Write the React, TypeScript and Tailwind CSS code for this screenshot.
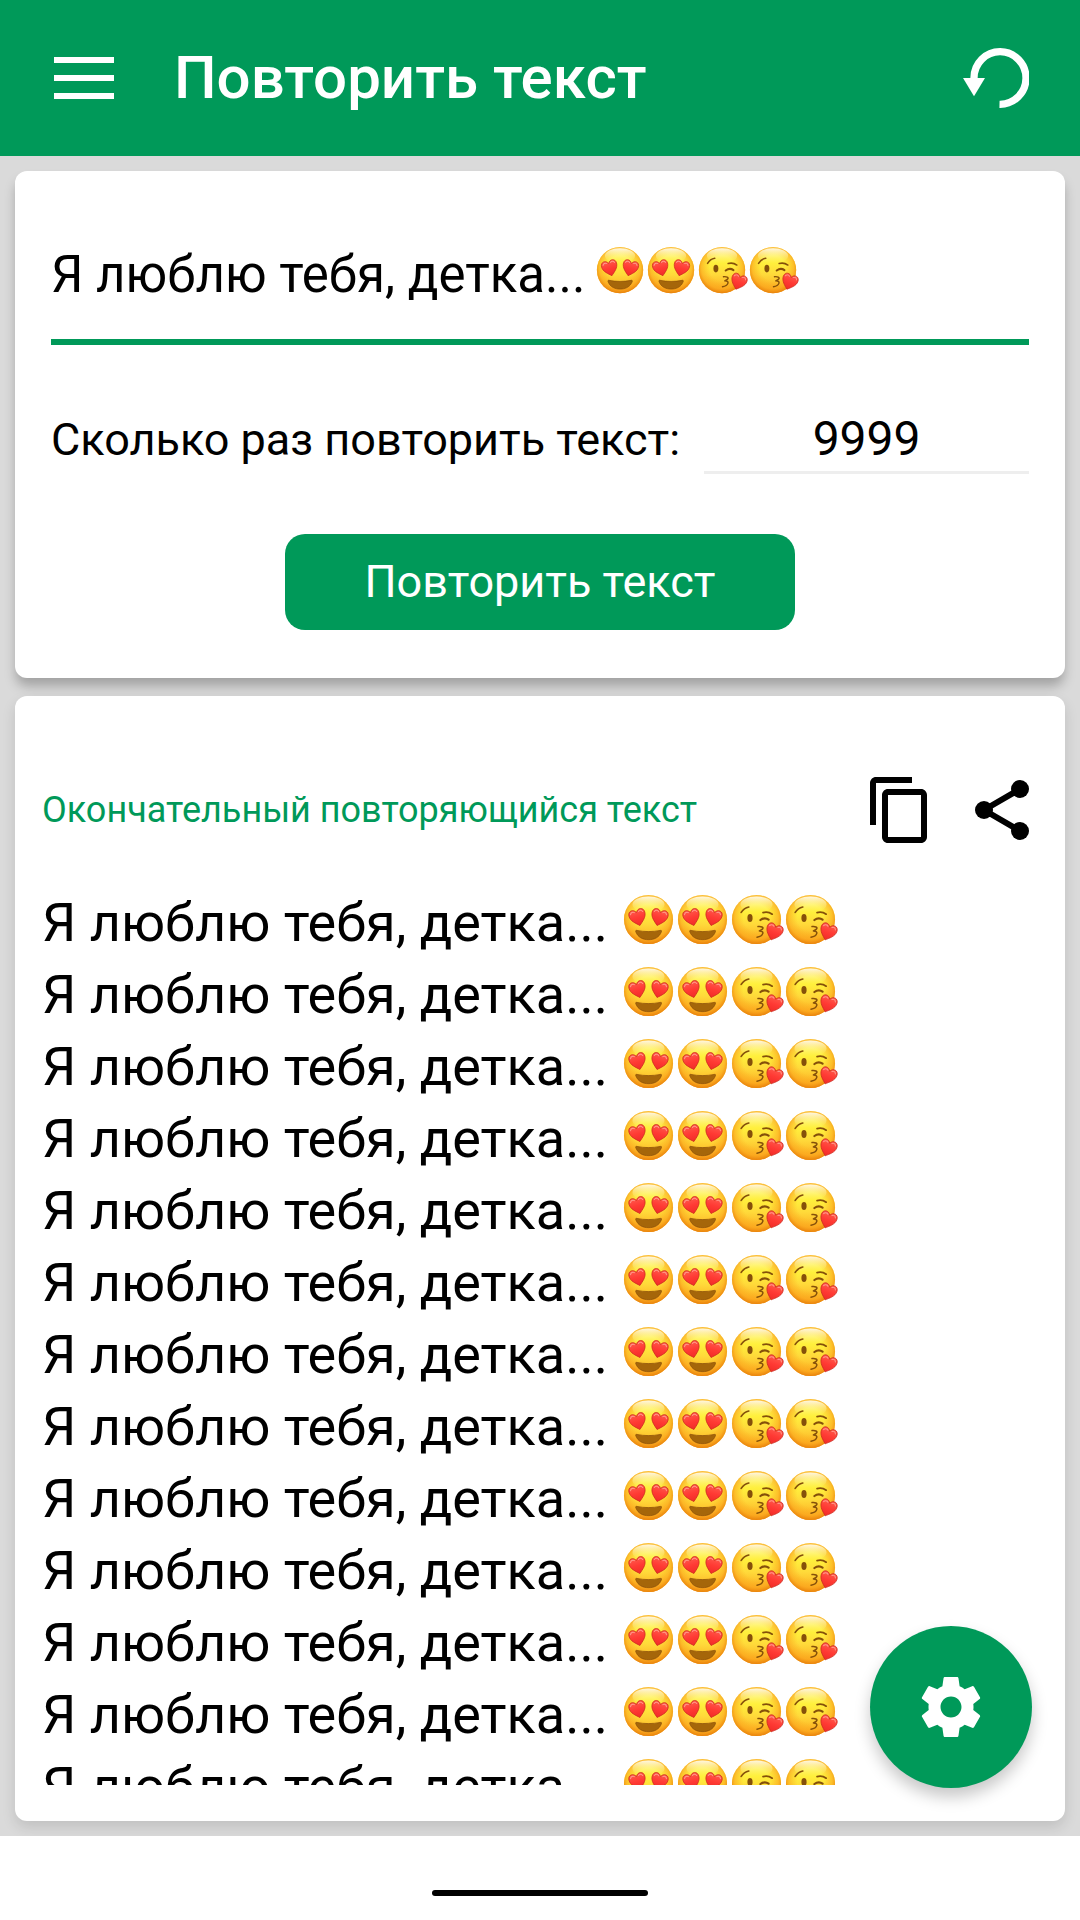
import React, { useId, useState } from "react";

const PHRASE = "Я люблю тебя, детка...";
const VISIBLE_LINES = 13;

type IconProps = {
  className?: string;
};

const Face: React.FC<{ className?: string; children: React.ReactNode }> = ({
  className,
  children,
}) => {
  const id = useId();
  return (
    <svg viewBox="0 0 54 54" className={className} aria-hidden="true">
      <defs>
        <linearGradient id={`${id}-base`} x1="0" y1="0" x2="0" y2="1">
          <stop offset="0" stopColor="#fff07a" />
          <stop offset="0.35" stopColor="#fff03c" />
          <stop offset="0.6" stopColor="#ffd93a" />
          <stop offset="1" stopColor="#fba51c" />
        </linearGradient>
        <radialGradient id={`${id}-rim`} cx="0.5" cy="0.46" r="0.54">
          <stop offset="0.5" stopColor="#fba81c" stopOpacity="0" />
          <stop offset="0.82" stopColor="#fba41c" stopOpacity="0.6" />
          <stop offset="1" stopColor="#e8820c" stopOpacity="1" />
        </radialGradient>
        <linearGradient id={`${id}-shine`} x1="0" y1="0" x2="0" y2="1">
          <stop offset="0" stopColor="#ffffff" stopOpacity="0.85" />
          <stop offset="1" stopColor="#fff65a" stopOpacity="0" />
        </linearGradient>
      </defs>
      <circle cx="26.5" cy="26.5" r="24.5" fill={`url(#${id}-base)`} />
      <circle cx="26.5" cy="26.5" r="24.5" fill={`url(#${id}-rim)`} />
      <ellipse cx="26.5" cy="11.5" rx="16" ry="8" fill={`url(#${id}-shine)`} />
      {children}
    </svg>
  );
};

const Heart: React.FC<{ transform: string }> = ({ transform }) => {
  const id = useId();
  return (
    <g transform={transform}>
      <linearGradient id={id} x1="0" y1="0" x2="0" y2="1">
        <stop offset="0" stopColor="#ff5a4c" />
        <stop offset="0.5" stopColor="#ff3a34" />
        <stop offset="1" stopColor="#f02c28" />
      </linearGradient>
      <path
        d="M0 9C-3.4 5.8-8.2 2.6-8.2-2.8C-8.2-8-2.2-9 0-4.4C2.2-9 8.2-8 8.2-2.8C8.2 2.6 3.4 5.8 0 9Z"
        fill={`url(#${id})`}
        stroke="#c9281c"
        strokeWidth="0.7"
      />
      <path
        d="M-6.3-3.8C-5.6-5.8-3.4-6.2-2-4.8M2.2-4.9C3.6-6.3 5.6-5.8 6.3-3.8"
        fill="none"
        stroke="#ff9a8c"
        strokeWidth="1"
        strokeLinecap="round"
      />
    </g>
  );
};

const HeartEyes: React.FC<IconProps> = ({ className }) => (
  <Face className={className}>
    <Heart transform="translate(15.6 23.8) rotate(-15)" />
    <Heart transform="translate(37.4 23.8) rotate(15)" />
    <path
      d="M14.8 37.4C22 39 31 39 38.4 37.4C39.6 37.2 39.7 37.9 39.3 39C37.3 44.2 32.5 46.7 26.6 46.7C20.7 46.7 15.9 44.2 13.9 39C13.5 37.9 13.6 37.2 14.8 37.4Z"
      fill="#a5660a"
      stroke="#874c08"
      strokeWidth="0.7"
    />
  </Face>
);

const BlowingKiss: React.FC<IconProps> = ({ className }) => (
  <Face className={className}>
    <ellipse cx="20" cy="25" rx="2.6" ry="4" fill="#85500a" />
    <g fill="none" stroke="#85500a" strokeLinecap="round" strokeLinejoin="round">
      <path d="M11.2 19.4C13 16.4 15.6 14.6 18.8 14" strokeWidth="1.7" />
      <path d="M33 19.6C36.2 18.7 39.5 19.2 42.2 21.2" strokeWidth="1.7" />
      <path d="M30.4 27C33 25 36.4 25 38.6 26.6" strokeWidth="2.2" />
      <path
        d="M28 33.6C31.5 33.2 33.5 34.3 32.8 35.6C32.2 36.7 30.8 37.3 29.4 38C31.6 37.9 33.3 38.8 32.8 40.4C32.2 42.2 30 43.8 27 44.2"
        strokeWidth="1.5"
      />
    </g>
    <Heart transform="translate(44.2 38.4) rotate(20)" />
  </Face>
);

const Emojis: React.FC<{ size: string }> = ({ size }) => (
  <span className="flex shrink-0" role="img" aria-label="😍😍😘😘">
    <HeartEyes className={size} />
    <HeartEyes className={size} />
    <BlowingKiss className={size} />
    <BlowingKiss className={size} />
  </span>
);

const MenuIcon: React.FC<IconProps> = ({ className }) => (
  <svg viewBox="0 0 60 42" className={className} fill="currentColor">
    <path d="M0 0h60v6H0zM0 18h60v6H0zM0 36h60v6H0z" />
  </svg>
);

const ResetIcon: React.FC<IconProps> = ({ className }) => (
  <svg viewBox="0 0 66 60" className={className}>
    <path
      d="M36.5 56.3A26 26.3 0 1 0 11 30"
      fill="none"
      stroke="currentColor"
      strokeWidth="7.3"
    />
    <path d="M0 30h22L11 48.3z" fill="currentColor" />
  </svg>
);

const CopyIcon: React.FC<IconProps> = ({ className }) => (
  <svg viewBox="0 0 24 24" className={className} fill="currentColor">
    <path d="M16 1H4c-1.1 0-2 .9-2 2v14h2V3h12V1zm3 4H8c-1.1 0-2 .9-2 2v14c0 1.1.9 2 2 2h11c1.1 0 2-.9 2-2V7c0-1.1-.9-2-2-2zm0 16H8V7h11v14z" />
  </svg>
);

const ShareIcon: React.FC<IconProps> = ({ className }) => (
  <svg viewBox="0 0 24 24" className={className} fill="currentColor">
    <circle cx="18" cy="5" r="3" />
    <circle cx="6" cy="12" r="3" />
    <circle cx="18" cy="19" r="3" />
    <path d="M18 5L6 12l12 7" fill="none" stroke="currentColor" strokeWidth="2" />
  </svg>
);

const GearIcon: React.FC<IconProps> = ({ className }) => (
  <svg viewBox="0 0 24 24" className={className} fill="currentColor">
    <path d="M19.43 12.98c.04-.32.07-.64.07-.98s-.03-.66-.07-.98l2.11-1.65c.19-.15.24-.42.12-.64l-2-3.46c-.12-.22-.39-.3-.61-.22l-2.49 1c-.52-.4-1.08-.73-1.69-.98l-.38-2.65C14.46 2.18 14.25 2 14 2h-4c-.25 0-.46.18-.49.42l-.38 2.65c-.61.25-1.17.59-1.69.98l-2.49-1c-.23-.09-.49 0-.61.22l-2 3.46c-.13.22-.07.49.12.64l2.11 1.65c-.04.32-.07.65-.07.98s.03.66.07.98l-2.11 1.65c-.19.15-.24.42-.12.64l2 3.46c.12.22.39.3.61.22l2.49-1c.52.4 1.08.73 1.69.98l.38 2.65c.03.24.24.42.49.42h4c.25 0 .46-.18.49-.42l.38-2.65c.61-.25 1.17-.59 1.69-.98l2.49 1c.23.09.49 0 .61-.22l2-3.46c.12-.22.07-.49-.12-.64l-2.11-1.65zM12 15.5c-1.93 0-3.5-1.57-3.5-3.5s1.57-3.5 3.5-3.5 3.5 1.57 3.5 3.5-1.57 3.5-3.5 3.5z" />
  </svg>
);

export default function App() {
  const [text, setText] = useState(PHRASE);
  const [count, setCount] = useState("9999");
  const [result, setResult] = useState(PHRASE);

  const handleReset = () => {
    setText("");
    setCount("");
    setResult("");
  };

  const lines = Array.from(
    { length: result ? Math.min(Number(count) || 0, VISIBLE_LINES) : 0 },
    () => result
  );

  return (
    <div className="flex h-screen flex-col bg-[#dadada] font-[Roboto,sans-serif] text-black">
      <header className="flex h-[156px] shrink-0 items-center bg-[#009959] pr-[51px] pl-[54px] text-white">
        <button aria-label="Меню">
          <MenuIcon className="h-[42px] w-[60px]" />
        </button>
        <h1 className="ml-[60px] flex-1 text-[60px] leading-[72px] font-medium">
          Повторить текст
        </h1>
        <button aria-label="Сбросить" onClick={handleReset}>
          <ResetIcon className="h-[60px] w-[66px]" />
        </button>
      </header>

      <main className="flex min-h-0 flex-1 flex-col gap-[18px] overflow-hidden p-[15px]">
        <section className="rounded-xl bg-white px-9 pt-[68px] pb-12 shadow-[0_9px_12px_-1px_rgba(0,0,0,0.26)]">
          <div className="flex h-[106px] items-start gap-2.5 border-b-6 border-[#009959]">
            <input
              aria-label="Текст"
              className="field-sizing-content text-[51px] leading-[72px] outline-none"
              value={text}
              onChange={(e) => setText(e.target.value)}
            />
            <Emojis size="my-1.5 size-[51px]" />
          </div>
          <div className="mt-16 flex items-end gap-6">
            <label htmlFor="count" className="pb-1 text-[45px] leading-[60px]">
              Сколько раз повторить текст:
            </label>
            <input
              id="count"
              inputMode="numeric"
              className="min-w-0 flex-1 border-b-3 border-[#eeeeee] pb-0.5 text-center text-[48px] leading-[60px] outline-none"
              value={count}
              onChange={(e) => setCount(e.target.value)}
            />
          </div>
          <button
            className="mx-auto mt-[60px] block h-24 w-[510px] rounded-[20px] bg-[#009959] text-[45px] text-white"
            onClick={() => setResult(text)}
          >
            Повторить текст
          </button>
        </section>

        <section className="relative flex min-h-0 flex-1 flex-col rounded-xl bg-white px-[27px] pt-[78px] pb-9 shadow-[0_6px_14px_rgba(0,0,0,0.12)]">
          <div className="flex items-center gap-[30px]">
            <h2 className="flex-1 text-[36px] leading-[48px] text-[#009959]">
              Окончательный повторяющийся текст
            </h2>
            <button aria-label="Копировать">
              <CopyIcon className="size-[72px]" />
            </button>
            <button aria-label="Поделиться">
              <ShareIcon className="size-[72px]" />
            </button>
          </div>
          <div className="mt-[41px] min-h-0 flex-1 overflow-hidden">
            {lines.map((line, i) => (
              <p key={i} className="flex h-[72px] gap-3.5 text-[54px] leading-[72px]">
                {line}
                <Emojis size="my-1.5 size-[54px]" />
              </p>
            ))}
          </div>
          <button
            aria-label="Настройки"
            className="absolute right-[33px] bottom-[33px] flex size-[162px] items-center justify-center rounded-full bg-[#009959] text-white shadow-[0_9px_16px_rgba(0,0,0,0.22)]"
          >
            <GearIcon className="size-[72px]" />
          </button>
        </section>
      </main>

      <footer className="flex h-[84px] shrink-0 items-end justify-center bg-white pb-6">
        <span className="h-1.5 w-[216px] rounded-full bg-black" />
      </footer>
    </div>
  );
}
